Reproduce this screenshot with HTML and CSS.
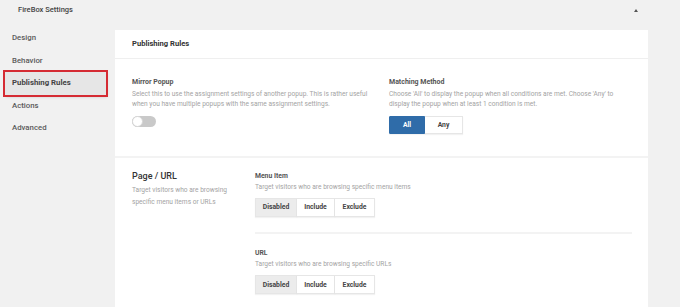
FILE: index.html
```html
<!DOCTYPE html>
<html>
<head>
<meta charset="utf-8">
<link rel="stylesheet" href="styles.css">
</head>
<body>
<div class="topbar">
  <span class="title">FireBox Settings</span>
  <span class="caret"></span>
</div>
<div class="main">
  <ul class="nav">
    <li class="nav-item">Design</li>
    <li class="nav-item">Behavior</li>
    <li class="nav-item active">Publishing Rules</li>
    <li class="nav-item">Actions</li>
    <li class="nav-item">Advanced</li>
  </ul>
  <div class="card">
    <div class="card-head">Publishing Rules</div>
    <div class="row">
      <div class="col col-left">
        <div class="label">Mirror Popup</div>
        <div class="desc">Select this to use the assignment settings of another popup. This is rather useful when you have multiple popups with the same assignment settings.</div>
        <div class="toggle"><span class="knob"></span></div>
      </div>
      <div class="col col-right">
        <div class="label">Matching Method</div>
        <div class="desc">Choose 'All' to display the popup when all conditions are met. Choose 'Any' to display the popup when at least 1 condition is met.</div>
        <div class="seg seg-match">
          <span class="seg-btn seg-all">All</span>
          <span class="seg-btn seg-any">Any</span>
        </div>
      </div>
    </div>
    <div class="sep"></div>
    <div class="rule">
      <div class="rule-info">
        <div class="rule-title">Page / URL</div>
        <div class="rule-desc">Target visitors who are browsing specific menu items or URLs</div>
      </div>
      <div class="rule-body">
        <div class="field">
          <div class="label small">Menu Item</div>
          <div class="desc one">Target visitors who are browsing specific menu items</div>
          <div class="seg">
            <span class="seg-btn st disabled">Disabled</span>
            <span class="seg-btn st inc">Include</span>
            <span class="seg-btn st exc">Exclude</span>
          </div>
        </div>
        <div class="field-sep"></div>
        <div class="field">
          <div class="label small">URL</div>
          <div class="desc one">Target visitors who are browsing specific URLs</div>
          <div class="seg">
            <span class="seg-btn st disabled">Disabled</span>
            <span class="seg-btn st inc">Include</span>
            <span class="seg-btn st exc">Exclude</span>
          </div>
        </div>
      </div>
    </div>
  </div>
</div>
</body>
</html>
```
FILE: styles.css
```css
* { box-sizing: border-box; }
html, body { margin: 0; padding: 0; }
body {
  background: #f1f1f1;
  font-family: Roboto, "Liberation Sans", sans-serif;
  width: 680px;
  height: 307px;
  overflow: hidden;
}
.topbar {
  height: 27px;
  display: flex;
  align-items: flex-start;
  justify-content: space-between;
  padding: 5px 42px 0 18px;
}
.title {
  font-size: 7.5px;
  font-weight: 500;
  color: #444;
  line-height: 10px;
}
.caret {
  width: 0;
  height: 0;
  margin-top: 4px;
  border-left: 2.5px solid transparent;
  border-right: 2.5px solid transparent;
  border-bottom: 3.5px solid #555;
}
.main {
  display: flex;
  align-items: flex-start;
}
.nav {
  list-style: none;
  margin: 0;
  padding: 0 0 0 5px;
  width: 115px;
}
.nav-item {
  height: 22.5px;
  line-height: 22.5px;
  width: 101px;
  padding-left: 7px;
  font-size: 7.8px;
  font-weight: 500;
  color: #5a5a5a;
}
.nav-item.active {
  font-weight: 700;
  color: #444;
  background: #e6e6e6;
  box-shadow: 0 0 0 1px #d52b33, 0 0 0 2px #d52b33, 1px 2px 3px rgba(0,0,0,0.15);
}
.card {
  margin-top: 3px;
  width: 533px;
  height: 290px;
  background: #fff;
}
.card-head {
  height: 29px;
  padding: 9px 17px 0;
  font-size: 7.6px;
  font-weight: 700;
  color: #333;
  line-height: 10px;
  border-bottom: 1px solid #efefef;
}
.row {
  display: flex;
  padding: 18px 16px 22px 17px;
}
.col-left { width: 257px; }
.col-right { flex: 1; }
.label {
  font-size: 7px;
  font-weight: 700;
  color: #555;
  line-height: 10px;
  height: 10px;
}
.label.small { font-size: 6.8px; }
.desc {
  font-size: 6.6px;
  color: #a3a3a3;
  line-height: 10.3px;
  margin-top: 2px;
  width: 242px;
}
.col-right .desc { width: 232px; }
.toggle {
  margin-top: 6px;
  width: 24px;
  height: 11px;
  border-radius: 6px;
  background: #c9c9c9;
  position: relative;
}
.knob {
  position: absolute;
  left: 0;
  top: 0;
  width: 11px;
  height: 11px;
  border-radius: 50%;
  background: #fff;
  border: 1px solid #d6d6d6;
}
.seg {
  display: flex;
  margin-top: 6px;
}
.seg-btn {
  display: flex;
  align-items: center;
  justify-content: center;
  font-size: 6.8px;
  font-weight: 700;
  color: #444;
  background: #fff;
  border: 1px solid #e6e6e6;
  box-shadow: 0 1px 1px rgba(0,0,0,0.05);
}
.seg-match .seg-btn { height: 18px; }
.seg-all {
  width: 36px;
  background: #2f6ca9;
  border-color: #2f6ca9;
  color: #fff;
  border-radius: 1px 0 0 1px;
}
.seg-any { width: 38px; border-left: none; }
.sep {
  height: 2px;
  background: #f3f3f3;
}
.rule {
  display: flex;
  padding: 12px 16px 0 17px;
}
.rule-info { width: 123px; }
.rule-title {
  font-size: 9px;
  font-weight: 500;
  color: #333;
  line-height: 12px;
}
.rule-desc {
  margin-top: 2px;
  font-size: 6.6px;
  color: #a3a3a3;
  line-height: 12.5px;
  width: 105px;
}
.rule-body { flex: 1; padding-top: 1px; }
.desc.one { width: auto; margin-top: 1px; }
.seg .st { height: 19px; }
.disabled { width: 42px; background: #ececec; border-color: #e6e6e6; }
.inc { width: 38px; border-left: none; }
.exc { width: 40px; border-left: none; }
.field-sep {
  height: 2px;
  background: #f3f3f3;
  margin: 15px 0 14px;
}
```
